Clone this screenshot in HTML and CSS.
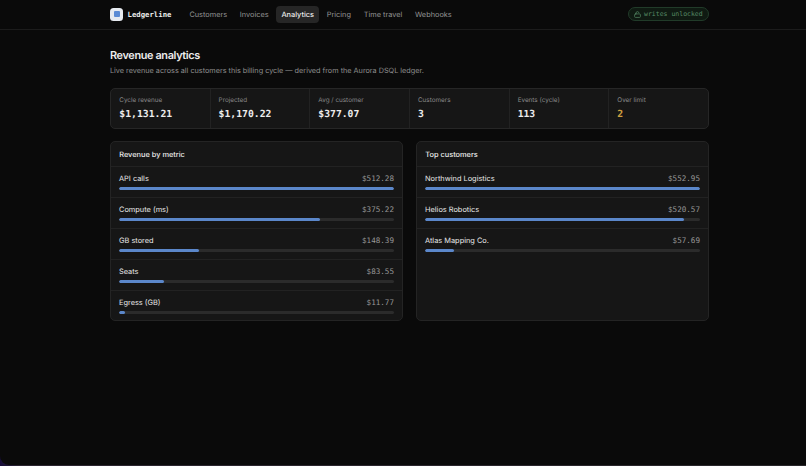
FILE: index.html
```html
<!DOCTYPE html>
<html lang="en">
<head>
<meta charset="utf-8">
<title>Ledgerline</title>
<link rel="stylesheet" href="styles.css">
</head>
<body>
<div class="window">
<header class="topbar">
  <div class="container bar">
    <div class="logo"><i></i></div>
    <span class="brand">Ledgerline</span>
    <nav class="nav">
      <a>Customers</a><a>Invoices</a><a class="active">Analytics</a><a>Pricing</a><a>Time travel</a><a>Webhooks</a>
    </nav>
    <div class="pill">
      <svg width="7" height="7" viewBox="0 0 24 24" fill="none" stroke="currentColor" stroke-width="2.4" stroke-linecap="round" stroke-linejoin="round"><rect x="2" y="10" width="20" height="12" rx="3"/><path d="M7 10V7a5 5 0 0 1 9.9-1"/></svg>
      <span>writes unlocked</span>
    </div>
  </div>
</header>
<main class="container">
  <h1>Revenue analytics</h1>
  <p class="sub">Live revenue across all customers this billing cycle — derived from the Aurora DSQL ledger.</p>
  <section class="stats">
    <div class="stat"><label>Cycle revenue</label><b>$1,131.21</b></div>
    <div class="stat"><label>Projected</label><b>$1,170.22</b></div>
    <div class="stat"><label>Avg / customer</label><b>$377.07</b></div>
    <div class="stat"><label>Customers</label><b>3</b></div>
    <div class="stat"><label>Events (cycle)</label><b>113</b></div>
    <div class="stat"><label>Over limit</label><b class="warn">2</b></div>
  </section>
  <div class="panels">
    <section class="panel">
      <h2>Revenue by metric</h2>
      <div class="row"><div class="line"><span>API calls</span><em>$512.28</em></div><div class="track"><div class="fill" style="width:100%"></div></div></div>
      <div class="row"><div class="line"><span>Compute (ms)</span><em>$375.22</em></div><div class="track"><div class="fill" style="width:73.2%"></div></div></div>
      <div class="row"><div class="line"><span>GB stored</span><em>$148.39</em></div><div class="track"><div class="fill" style="width:29%"></div></div></div>
      <div class="row"><div class="line"><span>Seats</span><em>$83.55</em></div><div class="track"><div class="fill" style="width:16.3%"></div></div></div>
      <div class="row"><div class="line"><span>Egress (GB)</span><em>$11.77</em></div><div class="track"><div class="fill" style="width:2.3%"></div></div></div>
    </section>
    <section class="panel">
      <h2>Top customers</h2>
      <div class="row"><div class="line"><span>Northwind Logistics</span><em>$552.95</em></div><div class="track"><div class="fill" style="width:100%"></div></div></div>
      <div class="row"><div class="line"><span>Helios Robotics</span><em>$520.57</em></div><div class="track"><div class="fill" style="width:94.1%"></div></div></div>
      <div class="row"><div class="line"><span>Atlas Mapping Co.</span><em>$57.69</em></div><div class="track"><div class="fill" style="width:10.4%"></div></div></div>
    </section>
  </div>
</main>
</div>
</body>
</html>
```
FILE: styles.css
```css
* { box-sizing: border-box; }
html, body { margin: 0; height: 100%; }
body {
  background: linear-gradient(90deg, #160c38, #2c2530 20px, #29272b);
  color: #ededed;
  font-family: Inter, "Liberation Sans", sans-serif;
  text-rendering: geometricPrecision;
  overflow: hidden;
}
.window { height: 465px; background: #0a0a0a; border-bottom-left-radius: 9px; }
.container { width: 599px; margin: 0 0 0 110px; }
.topbar { height: 30px; border-bottom: 1px solid #1c1c1c; }
.bar { display: flex; align-items: center; height: 28px; }
.logo { width: 13px; height: 13px; border-radius: 3.5px; background: #e6eaf0; display: grid; place-items: center; }
.logo i { width: 6px; height: 6px; border-radius: 1px; background: #5b8bd4; }
.brand { margin-left: 4.5px; width: 56.5px; font: bold 7.3px "DejaVu Sans Mono", monospace; }
.nav { display: flex; gap: 2px; font-size: 7.35px; color: #949494; }
.nav a { height: 17px; line-height: 17px; padding: 0 5.4px; border-radius: 4px; white-space: nowrap; }
.nav .active { background: #262626; color: #ededed; font-weight: 500; }
.pill {
  margin-left: auto; width: 81px; height: 14px; display: flex; align-items: center; gap: 3px;
  padding-left: 5px; border: 1px solid #213b29; border-radius: 7px; background: #0f1a12;
  color: #568a65; font: 6.5px "DejaVu Sans Mono", monospace; white-space: nowrap;
}
h1 { margin: 18px 0 0; font-size: 10.9px; line-height: 14px; font-weight: 600; letter-spacing: -.36px; }
.sub { margin: 2.5px 0 0; font-size: 7.28px; line-height: 11px; color: #8e8e8e; white-space: nowrap; }
.stats { display: grid; grid-template-columns: 98.6px repeat(5, 1fr); height: 41px; margin-top: 12.5px; background: #161616; border: 1px solid #262626; border-radius: 5px; }
.stat { padding: 6.5px 8px; border-left: 1px solid #222; }
.stat:first-child { border-left: 0; padding-left: 8.3px; }
.stat label { display: block; font-size: 6.35px; line-height: 9px; color: #888; white-space: nowrap; }
.stat b { display: block; margin-top: 4.5px; font: bold 9.75px/12px "DejaVu Sans Mono", monospace; }
.stat .warn { color: #d0a040; }
.panels { display: grid; grid-template-columns: 1fr 1fr; gap: 13px; margin-top: 12px; }
.panel { height: 180px; background: #161616; border: 1px solid #242424; border-radius: 5px; }
h2 { margin: 0; height: 24px; padding: 1px 0 0 8.2px; font-size: 7.4px; line-height: 24px; font-weight: 500; }
.row { height: 31px; border-top: 1px solid #222; padding: 7px 8px 0; }
.line { display: flex; justify-content: space-between; height: 10px; font-size: 7.4px; line-height: 10px; color: #e8e8e8; }
.line em { font: 7.6px/10px "DejaVu Sans Mono", monospace; color: #969696; }
.track { margin-top: 3px; height: 3px; border-radius: 2px; background: #2b2b2b; overflow: hidden; }
.fill { height: 100%; border-radius: 2px; background: #5b87ca; }
```
